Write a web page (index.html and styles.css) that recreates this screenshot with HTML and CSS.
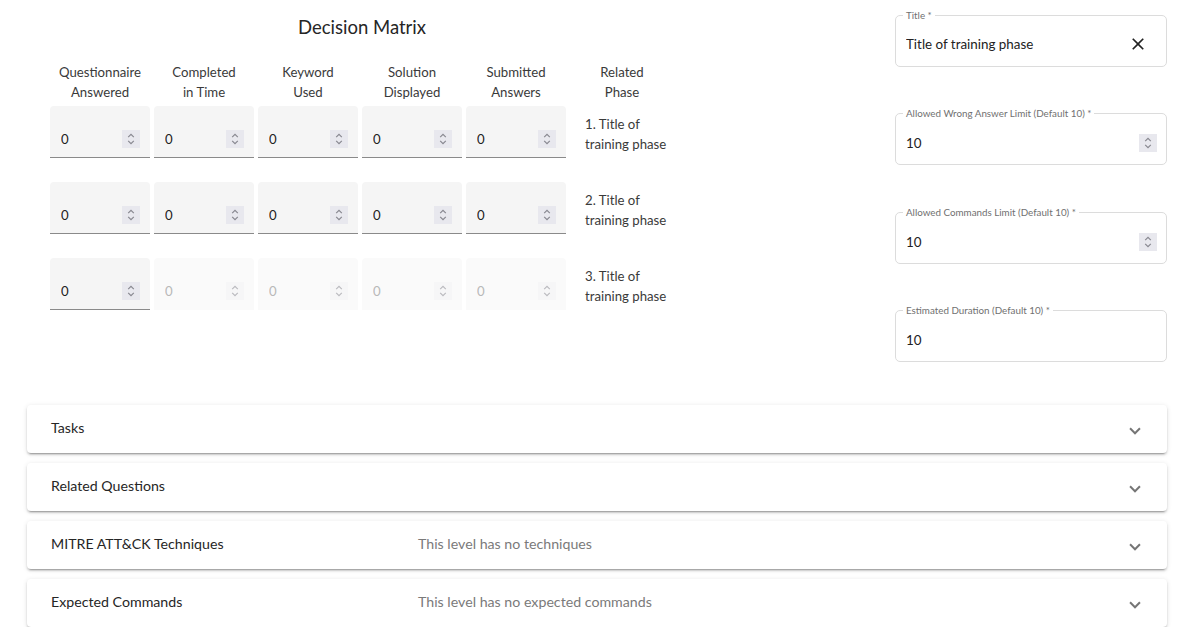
FILE: index.html
```html
<!DOCTYPE html>
<html lang="en">
<head>
<meta charset="utf-8">
<title>Training phase</title>
<link rel="stylesheet" href="styles.css">
</head>
<body>
<div class="page">
  <div class="top">
    <section class="matrix">
      <h2 class="matrix-title">Decision Matrix</h2>
      <div class="grid">
        <div class="head">Questionnaire<br>Answered</div>
        <div class="head">Completed<br>in Time</div>
        <div class="head">Keyword<br>Used</div>
        <div class="head">Solution<br>Displayed</div>
        <div class="head">Submitted<br>Answers</div>
        <div class="head">Related<br>Phase</div>

        <label class="fill"><input type="number" value="0"><span class="spin"></span></label>
        <label class="fill"><input type="number" value="0"><span class="spin"></span></label>
        <label class="fill"><input type="number" value="0"><span class="spin"></span></label>
        <label class="fill"><input type="number" value="0"><span class="spin"></span></label>
        <label class="fill"><input type="number" value="0"><span class="spin"></span></label>
        <div class="phase">1. Title of<br>training phase</div>

        <label class="fill"><input type="number" value="0"><span class="spin"></span></label>
        <label class="fill"><input type="number" value="0"><span class="spin"></span></label>
        <label class="fill"><input type="number" value="0"><span class="spin"></span></label>
        <label class="fill"><input type="number" value="0"><span class="spin"></span></label>
        <label class="fill"><input type="number" value="0"><span class="spin"></span></label>
        <div class="phase">2. Title of<br>training phase</div>

        <label class="fill"><input type="number" value="0"><span class="spin"></span></label>
        <label class="fill disabled"><input type="number" value="0" disabled><span class="spin"></span></label>
        <label class="fill disabled"><input type="number" value="0" disabled><span class="spin"></span></label>
        <label class="fill disabled"><input type="number" value="0" disabled><span class="spin"></span></label>
        <label class="fill disabled"><input type="number" value="0" disabled><span class="spin"></span></label>
        <div class="phase">3. Title of<br>training phase</div>
      </div>
    </section>

    <section class="form">
      <label class="outline">
        <span class="float">Title *</span>
        <input type="text" value="Title of training phase">
        <svg class="clear" viewBox="0 0 24 24" width="20" height="20"><path d="M19 6.41L17.59 5 12 10.59 6.41 5 5 6.41 10.59 12 5 17.59 6.41 19 12 13.41 17.59 19 19 17.59 13.41 12z"/></svg>
      </label>
      <label class="outline num">
        <span class="float">Allowed Wrong Answer Limit (Default 10) *</span>
        <input type="number" value="10"><span class="spin"></span>
      </label>
      <label class="outline num">
        <span class="float">Allowed Commands Limit (Default 10) *</span>
        <input type="number" value="10"><span class="spin"></span>
      </label>
      <label class="outline num">
        <span class="float">Estimated Duration (Default 10) *</span>
        <input type="text" value="10">
      </label>
    </section>
  </div>

  <div class="accordion">
    <div class="panel">
      <span class="p-title">Tasks</span>
      <span class="p-desc"></span>
      <span class="chev"></span>
    </div>
    <div class="panel">
      <span class="p-title">Related Questions</span>
      <span class="p-desc"></span>
      <span class="chev"></span>
    </div>
    <div class="panel">
      <span class="p-title">MITRE ATT&amp;CK Techniques</span>
      <span class="p-desc">This level has no techniques</span>
      <span class="chev"></span>
    </div>
    <div class="panel">
      <span class="p-title">Expected Commands</span>
      <span class="p-desc">This level has no expected commands</span>
      <span class="chev"></span>
    </div>
  </div>
</div>
</body>
</html>
```

FILE: styles.css
```css
* { box-sizing: border-box; }
html, body { margin: 0; background: #fff; }
body {
  font-family: Lato, "Open Sans", sans-serif;
  color: #2b2b2b;
  font-size: 13px;
}
.page { padding: 0 27px; }
.top { display: flex; justify-content: space-between; }

.matrix { margin-left: 23px; width: 624px; }
.matrix-title {
  margin: 13px 0 0;
  font-size: 18.5px;
  font-weight: 400;
  line-height: 28px;
  text-align: center;
  color: #262626;
}
.grid {
  margin-top: 21px;
  display: grid;
  grid-template-columns: repeat(5, 100px) 104px;
  column-gap: 4px;
}
.head {
  text-align: center;
  line-height: 20px;
  font-size: 13.2px;
  color: #3a3a3a;
  margin-bottom: 4px;
}

input[type=number]::-webkit-inner-spin-button,
input[type=number]::-webkit-outer-spin-button { -webkit-appearance: none; margin: 0; }
input[type=number] { -moz-appearance: textfield; }

.spin {
  flex: none;
  width: 18px;
  height: 18px;
  background: #e8e8ee url("data:image/svg+xml,%3Csvg xmlns='http://www.w3.org/2000/svg' width='18' height='18'%3E%3Cpath d='M6.2 7.2 9 4.4 11.8 7.2M6.2 10.8 9 13.6 11.8 10.8' fill='none' stroke='%23888890' stroke-width='1.2'/%3E%3C/svg%3E") no-repeat;
}

.fill {
  display: flex;
  align-items: flex-end;
  height: 52px;
  margin-bottom: 24px;
  background: #f5f5f5;
  border-radius: 4px 4px 0 0;
  border-bottom: 1px solid #8a8a8a;
  padding: 0 10px 9px 11px;
}
.fill input {
  flex: 1;
  min-width: 0;
  border: 0;
  outline: 0;
  background: transparent;
  font: inherit;
  font-size: 13.2px;
  color: #222;
  padding: 0;
  height: 18px;
}
.fill.disabled { background: #fafafa; border-bottom-color: transparent; }
.fill.disabled input { color: #b8b8b8; }
.fill.disabled .spin { background-color: #f4f4f6; opacity: .55; }
.phase {
  padding: 8px 0 0 15px;
  line-height: 20px;
  font-size: 13.2px;
  color: #3a3a3a;
}

.form { width: 272px; padding-top: 15px; }
.outline {
  position: relative;
  display: flex;
  align-items: center;
  height: 52px;
  border: 1px solid #dcdcdc;
  border-radius: 5px;
  padding: 7px 9px 0 10px;
  margin-bottom: 46px;
}
.outline:nth-child(1) { padding-top: 5px; }
.outline:nth-child(2) { margin-bottom: 47px; }
.outline:last-child { margin-bottom: 0; }
.float {
  position: absolute;
  top: -7px;
  left: 7px;
  padding: 0 3px;
  background: #fff;
  font-size: 9.8px;
  line-height: 12px;
  color: #707070;
  white-space: nowrap;
}
.outline input {
  flex: 1;
  min-width: 0;
  border: 0;
  outline: 0;
  background: transparent;
  font: inherit;
  font-size: 13.4px;
  color: #222;
  padding: 0;
  height: 18px;
}
.clear { fill: #222; margin-right: 9px; }

.accordion {
  margin-top: 43px;
  display: flex;
  flex-direction: column;
  gap: 10px;
}
.panel {
  display: flex;
  align-items: center;
  height: 48px;
  padding: 0 24px;
  background: #fff;
  border-radius: 4px;
  box-shadow: 0 3px 1px -2px rgba(0,0,0,.2), 0 2px 2px 0 rgba(0,0,0,.14), 0 1px 5px 0 rgba(0,0,0,.12);
  font-size: 14.2px;
}
.p-title { flex: 0 0 351px; margin-right: 16px; color: #262626; padding-bottom: 3px; }
.p-desc { flex: 1 1 0; margin-right: 16px; color: #7a7a7a; padding-bottom: 3px; }
.chev {
  width: 8px;
  height: 8px;
  margin: 0 4px 1px 0;
  border-style: solid;
  border-color: rgba(0,0,0,.54);
  border-width: 0 2px 2px 0;
  transform: rotate(45deg);
}
```
